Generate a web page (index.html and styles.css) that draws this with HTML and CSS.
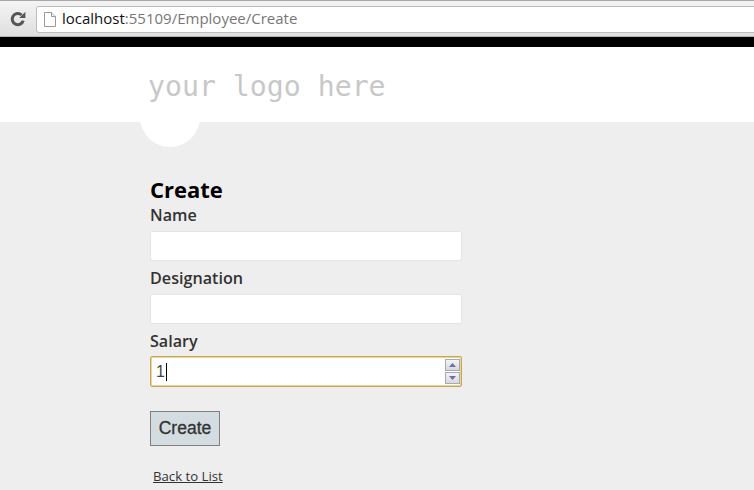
FILE: index.html
```html
<!DOCTYPE html>
<html lang="en">
<head>
<meta charset="utf-8">
<title>Create</title>
<link rel="stylesheet" href="styles.css">
</head>
<body>
<div class="toolbar">
  <svg class="reload" width="16" height="16" viewBox="0 0 16 16"><path d="M13.2 9.6A5.6 5.6 0 1 1 11.6 4" fill="none" stroke="#555" stroke-width="3"/><path d="M9.2 6.9 15.4 6.9 15.4 .8Z" fill="#555"/></svg>
  <div class="omnibox">
    <svg class="page-icon" width="12" height="15" viewBox="0 0 12 15"><path d="M.5 .5H7.5L11.5 4.5V14.5H.5Z" fill="#fff" stroke="#999"/><path d="M7.5 .5V4.5H11.5" fill="#eee" stroke="#999"/></svg>
    <span class="host">localhost</span><span class="path">:55109/Employee/Create</span>
  </div>
</div>
<div class="blackbar"></div>
<header class="site-header">
  <div class="circle"></div>
  <div class="logo">your logo here</div>
</header>
<main class="content">
  <h2 class="title">Create</h2>
  <form class="form">
    <label class="label">Name</label>
    <div class="field"></div>
    <label class="label">Designation</label>
    <div class="field"></div>
    <label class="label">Salary</label>
    <div class="field focused">
      <span class="value">1</span><span class="caret"></span>
      <span class="spinner">
        <span class="spin"><svg width="7" height="4" viewBox="0 0 7 4"><path d="M3.5 0 7 4H0Z" fill="#6a6fb0"/></svg></span>
        <span class="spin"><svg width="7" height="4" viewBox="0 0 7 4"><path d="M0 0H7L3.5 4Z" fill="#6a6fb0"/></svg></span>
      </span>
    </div>
    <button class="submit" type="button">Create</button>
  </form>
  <a class="back" href="#">Back to List</a>
</main>
</body>
</html>
```

FILE: styles.css
```css
html, body {
  margin: 0;
  padding: 0;
  height: 100%;
  overflow: hidden;
}
body {
  background: #eeeeee;
  font-family: "Open Sans", "Noto Sans", sans-serif;
  color: #333;
}
.toolbar {
  height: 37px;
  box-sizing: border-box;
  display: flex;
  align-items: center;
  padding: 1px 0 0 10px;
  gap: 4px;
  background: linear-gradient(#f4f4f4, #dfdfdf);
  border-top: 1px solid #a8a8a8;
  border-bottom: 1px solid #b4b4b4;
}
.reload { flex: none; margin-right: 6px; }
.omnibox {
  flex: 1;
  height: 27px;
  box-sizing: border-box;
  margin-right: -2px;
  display: flex;
  align-items: center;
  background: #fff;
  border: 1px solid #bdbdbd;
  border-radius: 3px 0 0 3px;
  padding-left: 7px;
  padding-bottom: 2px;
  font-family: "Open Sans", sans-serif;
  font-size: 15px;
}
.page-icon { margin-right: 6px; flex: none; margin-top: 2px; }
.host { color: #111; }
.path { color: #777; }
.blackbar { height: 10px; background: #000; }
.site-header {
  position: relative;
  height: 75px;
  background: #fff;
  padding-left: 148px;
}
.logo {
  position: relative;
  font-family: "DejaVu Sans Mono", monospace;
  font-size: 28.2px;
  line-height: 80px;
  color: #c8c8c8;
}
.circle {
  position: absolute;
  left: 140px;
  top: 40px;
  width: 60px;
  height: 60px;
  border-radius: 50%;
  background: #fff;
}
.content {
  padding: 52px 0 0 150px;
}
.title {
  margin: 0;
  font-size: 22px;
  line-height: 30px;
  font-weight: 700;
  color: #000;
  font-family: "Open Sans", sans-serif;
}
.form {
  display: flex;
  flex-direction: column;
  align-items: flex-start;
}
.label {
  font-size: 16.15px;
  line-height: 20px;
  font-weight: 600;
  margin-top: 2px;
  height: 20px;
  color: #333;
}
.label:first-child { margin-top: 1px; }
.field {
  width: 312px;
  height: 30px;
  box-sizing: border-box;
  margin-top: 6px;
  margin-bottom: 5px;
  background: #fff;
  border: 1px solid #e4e4e4;
  border-radius: 2px;
  position: relative;
  display: flex;
  align-items: center;
  padding-left: 5px;
}
.focused {
  height: 31px;
  margin-top: 5px;
  border: 1px solid #c8a84e;
  box-shadow: 0 0 0 1px #e6d49c inset;
}
.value {
  font-family: "Liberation Sans", sans-serif;
  font-size: 16px;
  color: #444;
}
.caret {
  width: 1px;
  height: 18px;
  background: #000;
  margin-left: 1px;
}
.spinner {
  position: absolute;
  right: 1px;
  top: 2px;
  display: flex;
  flex-direction: column;
  gap: 1px;
}
.spin {
  width: 15px;
  height: 12px;
  box-sizing: border-box;
  border: 1px solid #a9a9b5;
  background: linear-gradient(#f4f4f4, #d8d8d8);
  display: flex;
  align-items: center;
  justify-content: center;
}
.submit {
  margin-top: 19px;
  width: 70px;
  height: 35px;
  box-sizing: border-box;
  padding: 0;
  font-family: "Liberation Sans", sans-serif;
  font-size: 17.5px;
  -webkit-text-stroke: 0.3px #333;
  color: #333;
  background: #d3dce0;
  border: 1px solid #808080;
}
.back {
  display: inline-block;
  margin: 21px 0 0 3px;
  font-size: 13.2px;
  line-height: 18px;
  color: #333;
}
```
